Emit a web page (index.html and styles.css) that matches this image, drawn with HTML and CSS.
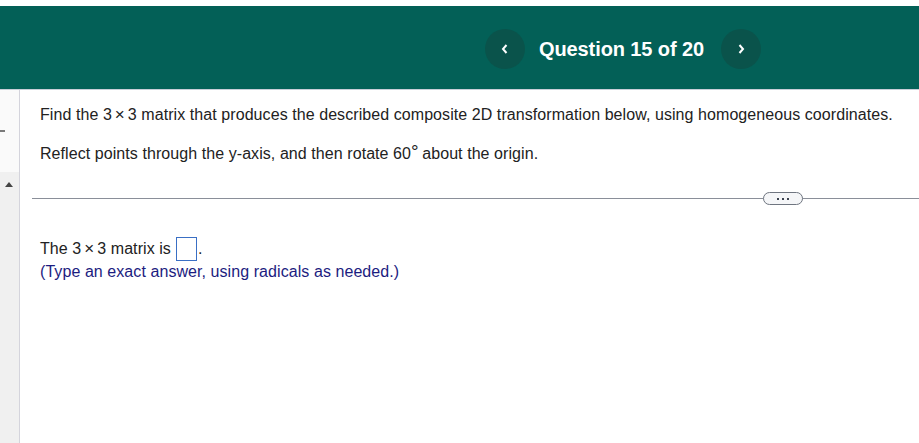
FILE: index.html
```html
<!DOCTYPE html>
<html>
<head>
<meta charset="utf-8">
<link rel="stylesheet" href="styles.css">
</head>
<body>
<div class="page">
  <header class="header">
    <div class="nav">
      <button class="navbtn" aria-label="Previous">
        <svg width="10" height="12" viewBox="0 0 10 12"><path d="M6.5 2 L3 6 L6.5 10" fill="none" stroke="#fff" stroke-width="2"/></svg>
      </button>
      <span class="qtitle">Question 15 of 20</span>
      <button class="navbtn" aria-label="Next">
        <svg width="10" height="12" viewBox="0 0 10 12"><path d="M3.5 2 L7 6 L3.5 10" fill="none" stroke="#fff" stroke-width="2"/></svg>
      </button>
    </div>
  </header>
  <div class="body">
    <aside class="side">
      <div class="side-top"><span class="dash"></span></div>
      <div class="side-bottom"><span class="tri"></span></div>
    </aside>
    <main class="main">
      <p class="q1">Find the 3<span class="x">×</span>3 matrix that produces the described composite 2D transformation below, using homogeneous coordinates.</p>
      <p class="q2">Reflect points through the y-axis, and then rotate 60<span class="deg">°</span> about the origin.</p>
      <div class="divider">
        <span class="more"><i></i><i></i><i></i></span>
      </div>
      <p class="ans">The 3<span class="x">×</span>3 matrix is <span class="box"></span>.</p>
      <p class="hint">(Type an exact answer, using radicals as needed.)</p>
    </main>
  </div>
</div>
</body>
</html>
```
FILE: styles.css
```css
html, body { margin: 0; padding: 0; background: #fff; }
body { font-family: "Liberation Sans", Arial, sans-serif; }
.page { width: 919px; height: 443px; overflow: hidden; display: flex; flex-direction: column; }
.header {
  margin-top: 6px;
  height: 83px;
  background: #036057;
  border-bottom: 1px solid #c9ced8;
  display: flex;
  align-items: center;
  padding-left: 485px;
  box-sizing: content-box;
}
.nav { display: flex; align-items: center; margin-top: 3px; }
.navbtn {
  width: 40px; height: 40px; border-radius: 50%;
  background: #0a534b; border: none; padding: 0;
  display: flex; align-items: center; justify-content: center;
}
.qtitle { color: #fff; font-weight: bold; font-size: 20px; margin: 0 17px 0 14px; letter-spacing: -0.1px; }
.body { flex: 1; display: flex; }
.side { width: 19px; border-right: 1px solid #d4d4dc; display: flex; flex-direction: column; }
.side-top { height: 82px; background: #fafafa; position: relative; }
.dash { position: absolute; left: 0; top: 40px; width: 5px; height: 2px; background: #7a7a7a; }
.side-bottom { flex: 1; background: #f0f0f0; position: relative; }
.tri { position: absolute; left: 5px; top: 10px; width: 0; height: 0;
  border-left: 4px solid transparent; border-right: 4px solid transparent; border-bottom: 5px solid #444; }
.main { flex: 1; padding-left: 20px; color: #222; font-size: 16px; letter-spacing: 0.07px; }
.main p { margin: 0; }
.q1 { margin-top: 15px !important; line-height: 20px; }
.q2 { margin-top: 19px !important; line-height: 20px; }
.deg { font-size: 19px; line-height: 0; position: relative; top: -1px; margin-left: 0; margin-right: -1px; }
.x { margin: 0 3px; font-size: 17px; }
.divider { margin: 34px 0 0 -8px; height: 1px; background: #8a8f99; position: relative; }
.more { position: absolute; left: 731px; top: -6px; width: 38px; height: 11px;
  border: 1px solid #6f7580; border-radius: 7px; background: #f5f6f8;
  display: flex; align-items: center; justify-content: center; gap: 3px; }
.more i { width: 2px; height: 2px; background: #3d4350; display: block; }
.ans { margin-top: 38px !important; line-height: 24px; display: flex; align-items: center; }
.box { display: inline-block; width: 19px; height: 22px; border: 1px solid #3a6fc4; margin-left: 5px; margin-right: 1px; }
.hint { color: #1c1c80; line-height: 20px; margin-top: 1px !important; }
```
